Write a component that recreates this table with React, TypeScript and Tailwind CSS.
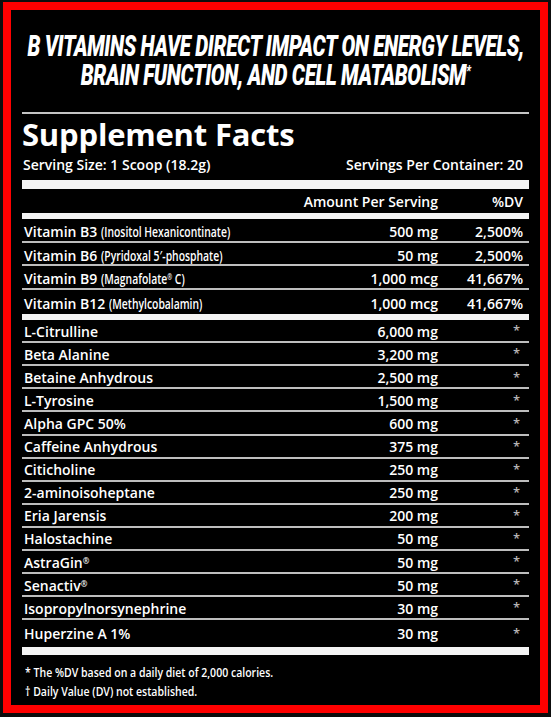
const vitamins = [
  { name: "Vitamin B3", note: "(Inositol Hexanicontinate)", amount: "500 mg", dv: "2,500%" },
  { name: "Vitamin B6", note: "(Pyridoxal 5′-phosphate)", amount: "50 mg", dv: "2,500%" },
  { name: "Vitamin B9", note: "(Magnafolate", reg: true, tail: " C)", amount: "1,000 mcg", dv: "41,667%" },
  { name: "Vitamin B12", note: "(Methylcobalamin)", amount: "1,000 mcg", dv: "41,667%" },
];

const blend = [
  { name: "L-Citrulline", amount: "6,000 mg" },
  { name: "Beta Alanine", amount: "3,200 mg" },
  { name: "Betaine Anhydrous", amount: "2,500 mg" },
  { name: "L-Tyrosine", amount: "1,500 mg" },
  { name: "Alpha GPC 50%", amount: "600 mg" },
  { name: "Caffeine Anhydrous", amount: "375 mg" },
  { name: "Citicholine", amount: "250 mg" },
  { name: "2-aminoisoheptane", amount: "250 mg" },
  { name: "Eria Jarensis", amount: "200 mg" },
  { name: "Halostachine", amount: "50 mg" },
  { name: "AstraGin", reg: true, amount: "50 mg" },
  { name: "Senactiv", reg: true, amount: "50 mg" },
  { name: "Isopropylnorsynephrine", amount: "30 mg" },
  { name: "Huperzine A 1%", amount: "30 mg" },
];

const sans = "font-['Open_Sans',sans-serif]";

export default function App() {
  return (
    <div className="h-[717px] w-[551px] overflow-hidden bg-[#0d0d0d] pb-[4px] pl-[3px] pr-[3px] pt-[2px]">
      <div className={`flex h-full flex-col border-[8px] border-[#ff0000] bg-black px-[11px] text-white ${sans}`}>
        {/* headline, condensed by scaling a heavy italic */}
        <div className="mt-[22px] flex justify-center">
          <div className="w-max origin-center scale-x-[0.71] whitespace-nowrap text-center font-['Roboto',sans-serif] text-[29px] font-black italic leading-[29px] tracking-[-0.5px]">
            <div>B VITAMINS HAVE DIRECT IMPACT ON ENERGY LEVELS,</div>
            <div>
              BRAIN FUNCTION, AND CELL MATABOLISM<span className="align-top text-[15px] leading-[20px]">*</span>
            </div>
          </div>
        </div>

        <div className="mt-[22px] h-[2px] bg-[#c4c4c4]" />

        <h1 className="mt-[5px] text-[31px] font-bold leading-[30px] tracking-[-0.2px]">Supplement Facts</h1>
        <div className="mt-[9px] flex justify-between text-[14px] font-semibold leading-[14px]">
          <span className="pl-[1px]">Serving Size: 1 Scoop (18.2g)</span>
          <span className="pr-[6px]">Servings Per Container: 20</span>
        </div>

        <div className="mt-[8px] h-[9px] bg-[#f4f4f4]" />
        <div className="flex h-[24px] items-center text-[14px] font-semibold">
          <span className="flex-1" />
          <span className="text-right">Amount Per Serving</span>
          <span className="w-[91px] pr-[6px] text-right">%DV</span>
        </div>
        <div className="h-[6px] bg-[#f4f4f4]" />

        {vitamins.map((v, i) => (
          <div
            key={v.name}
            className={`flex items-center pt-[3px] text-[14px] font-semibold ${
              i < vitamins.length - 1 ? "h-[23.7px] border-b-2 border-[#bdbdbd]" : "h-[24px]"
            }`}
          >
            <span className="flex min-w-0 flex-1 items-baseline whitespace-nowrap pl-[2px]">
              <span>{v.name}</span>
              <span className="ml-[4px] inline-block origin-left scale-x-[0.74] text-[14px] font-semibold">
                {v.note}
                {v.reg && <sup className="text-[8px]">®</sup>}
                {v.tail}
              </span>
            </span>
            <span className="text-right">{v.amount}</span>
            <span className="w-[91px] pr-[6px] text-right">{v.dv}</span>
          </div>
        ))}
        <div className="h-[6px] bg-[#f4f4f4]" />

        {blend.map((b, i) => (
          <div
            key={b.name}
            className={`flex items-center pt-[1px] text-[14px] font-semibold ${
              i < blend.length - 1 ? "h-[23.1px] border-b-2 border-[#bdbdbd]" : "h-[27px] pb-[2px]"
            }`}
          >
            <span className="flex-1 pl-[2px]">
              {b.name}
              {b.reg && <sup className="text-[8px]">®</sup>}
            </span>
            <span className="text-right">{b.amount}</span>
            <span className="w-[91px] pr-[9px] text-right text-[13px] text-[#b4b4b4]">*</span>
          </div>
        ))}
        <div className="h-[8px] bg-[#f4f4f4]" />

        <div className="mt-[8px] pl-[3px] text-[13px] font-semibold leading-[19px]">
          <p className="w-max origin-left scale-x-[0.81]">* The %DV based on a daily diet of 2,000 calories.</p>
          <p className="w-max origin-left scale-x-[0.81]">† Daily Value (DV) not established.</p>
        </div>
      </div>
    </div>
  );
}
